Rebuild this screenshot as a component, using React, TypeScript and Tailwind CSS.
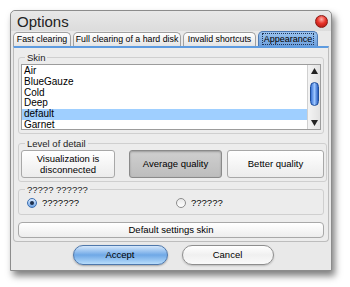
const skins = ["Air", "BlueGauze", "Cold", "Deep", "default", "Garnet"];

const tabs = [
  { label: "Fast clearing", w: "w-[58px]" },
  { label: "Full clearing of a hard disk", w: "w-[108px]" },
  { label: "Invalid shortcuts", w: "w-[73px]" },
];

const Radio = ({ checked }: { checked?: boolean }) =>
  checked ? (
    <span className="w-[10px] h-[10px] rounded-full border border-[#3c6fb0] bg-gradient-to-b from-[#dcecff] to-[#6fa3e3] flex items-center justify-center">
      <span className="w-[4px] h-[4px] rounded-full bg-[#1d2f4a]" />
    </span>
  ) : (
    <span className="w-[10px] h-[10px] rounded-full border border-[#8c8c8c] bg-gradient-to-b from-[#e8e8e8] to-white" />
  );

const App = () => {
  return (
    <div className="w-[350px] h-[287px] bg-white pt-[10px] pl-[10px] font-['Liberation_Sans',Arial,sans-serif] text-[9.5px] text-black overflow-hidden">
      <div className="w-[322px] h-[261px] bg-[#e9e9e9] border border-[#8c8c8c] rounded-t-[5px] shadow-[3px_5px_7px_rgba(0,0,0,0.5)] flex flex-col">
        {/* title bar */}
        <div className="h-[20px] flex items-center justify-between pl-[6px] pr-[3px] bg-gradient-to-b from-[#e8e8e8] to-[#dcdcdc] rounded-t-[5px]">
          <span className="text-[15px] leading-none text-[#222]">Options</span>
          <span className="w-[13px] h-[13px] rounded-full bg-[radial-gradient(circle_at_50%_30%,#ffb0a8_0%,#e8332a_45%,#a3120c_100%)] border border-[#8a1a14]" />
        </div>

        {/* tabs */}
        <div className="h-[15px] flex items-end gap-[2px] pl-[2px]">
          {tabs.map((t) => (
            <div
              key={t.label}
              className={`${t.w} h-[14px] flex items-center justify-center rounded-t-[5px] border border-b-0 border-[#a0a0a0] bg-gradient-to-b from-white to-[#e4e4e4] text-[8.8px] leading-none whitespace-nowrap overflow-hidden`}
            >
              {t.label}
            </div>
          ))}
          <div className="w-[60px] h-[15px] flex items-center justify-center rounded-t-[5px] border border-b-0 border-[#4b79b4] bg-gradient-to-b from-[#9cc4ef] to-[#6d9fdc] text-[9px]">
            <span className="border border-dotted border-[#1f3556] px-[1px] leading-[10px]">Appearance</span>
          </div>
        </div>

        {/* panel */}
        <div className="mx-[2px] h-[196px] border-t-2 border-t-[#5d9be0] border-x border-b border-x-[#bdbdbd] border-b-[#bdbdbd] rounded-b-[4px] bg-[#ececec] px-[4px] pt-[3px] flex flex-col">
          <fieldset className="border border-[#cfcfcf] rounded-[3px] px-[2px] pb-[3px]">
            <legend className="ml-[4px] px-[2px] leading-[13px] text-[#222]">Skin</legend>
            <div className="h-[66px] bg-white border border-[#9c9c9c] flex">
              <div className="flex-1 pt-[1px] text-[10px]">
                {skins.map((s) => (
                  <div
                    key={s}
                    className={`h-[10.75px] leading-[10.75px] pl-[2px] ${s === "default" ? "bg-[#9fcfff]" : ""}`}
                  >
                    {s}
                  </div>
                ))}
              </div>
              <div className="w-[13px] bg-gradient-to-r from-[#f4f4f4] to-[#e2e2e2] border-l border-[#d0d0d0] flex flex-col items-center justify-between py-[3px]">
                <svg width="7" height="6" viewBox="0 0 7 6">
                  <path d="M3.5 0 L7 6 L0 6 Z" fill="#222" />
                </svg>
                <div className="w-[9px] h-[24px] -mt-[6px] rounded-full border border-[#1f4f9c] bg-gradient-to-r from-[#3b73d4] via-[#9cc6ff] to-[#2a5fc0]" />
                <svg width="7" height="6" viewBox="0 0 7 6">
                  <path d="M0 0 L7 0 L3.5 6 Z" fill="#222" />
                </svg>
              </div>
            </div>
          </fieldset>

          <fieldset className="mt-[3px] border border-[#cfcfcf] rounded-[3px] px-[2px] pb-[3px]">
            <legend className="ml-[4px] px-[2px] leading-[13px] text-[#222]">Level of detail</legend>
            <div className="flex gap-[5px] items-center">
              <button className="w-[94px] h-[28px] rounded-[3px] border border-[#a8a8a8] bg-gradient-to-b from-white to-[#ececec] leading-[11px] text-center">
                Visualization is
                <br />
                disconnected
              </button>
              <button className="ml-[9px] w-[93px] h-[28px] rounded-[3px] border border-[#8a8a8a] bg-gradient-to-b from-[#cfcfcf] to-[#bdbdbd] shadow-[inset_0_1px_2px_rgba(0,0,0,0.25)]">
                Average quality
              </button>
              <button className="w-[97px] h-[28px] rounded-[3px] border border-[#a8a8a8] bg-gradient-to-b from-white to-[#ececec]">
                Better quality
              </button>
            </div>
          </fieldset>

          <fieldset className="mt-[1px] border border-[#cfcfcf] rounded-[3px] px-[8px] pb-[4px]">
            <legend className="ml-[-2px] px-[2px] leading-[13px] text-[#222]">????? ??????</legend>
            <div className="flex items-center h-[14px]">
              <div className="flex items-center gap-[5px] w-[149px]">
                <Radio checked />
                <span>???????</span>
              </div>
              <div className="flex items-center gap-[5px]">
                <Radio />
                <span>??????</span>
              </div>
            </div>
          </fieldset>

          <button className="mt-[7px] h-[16px] rounded-[4px] border border-[#a8a8a8] bg-gradient-to-b from-white to-[#ededed] leading-none">
            Default settings skin
          </button>
        </div>

        {/* bottom buttons */}
        <div className="flex justify-center gap-[14px] pt-[3px] pl-[4px]">
          <button className="w-[95px] h-[20px] rounded-full border border-[#4e77ab] bg-gradient-to-b from-[#d4e7fb] via-[#6fa8e6] to-[#b7dcfb] shadow-[0_1px_2px_rgba(0,0,0,0.3)]">
            Accept
          </button>
          <button className="w-[92px] h-[20px] rounded-full border border-[#8e8e8e] bg-gradient-to-b from-white via-[#f0f0f0] to-[#fafafa] shadow-[0_1px_2px_rgba(0,0,0,0.2)]">
            Cancel
          </button>
        </div>
      </div>
    </div>
  );
};

export default App;
